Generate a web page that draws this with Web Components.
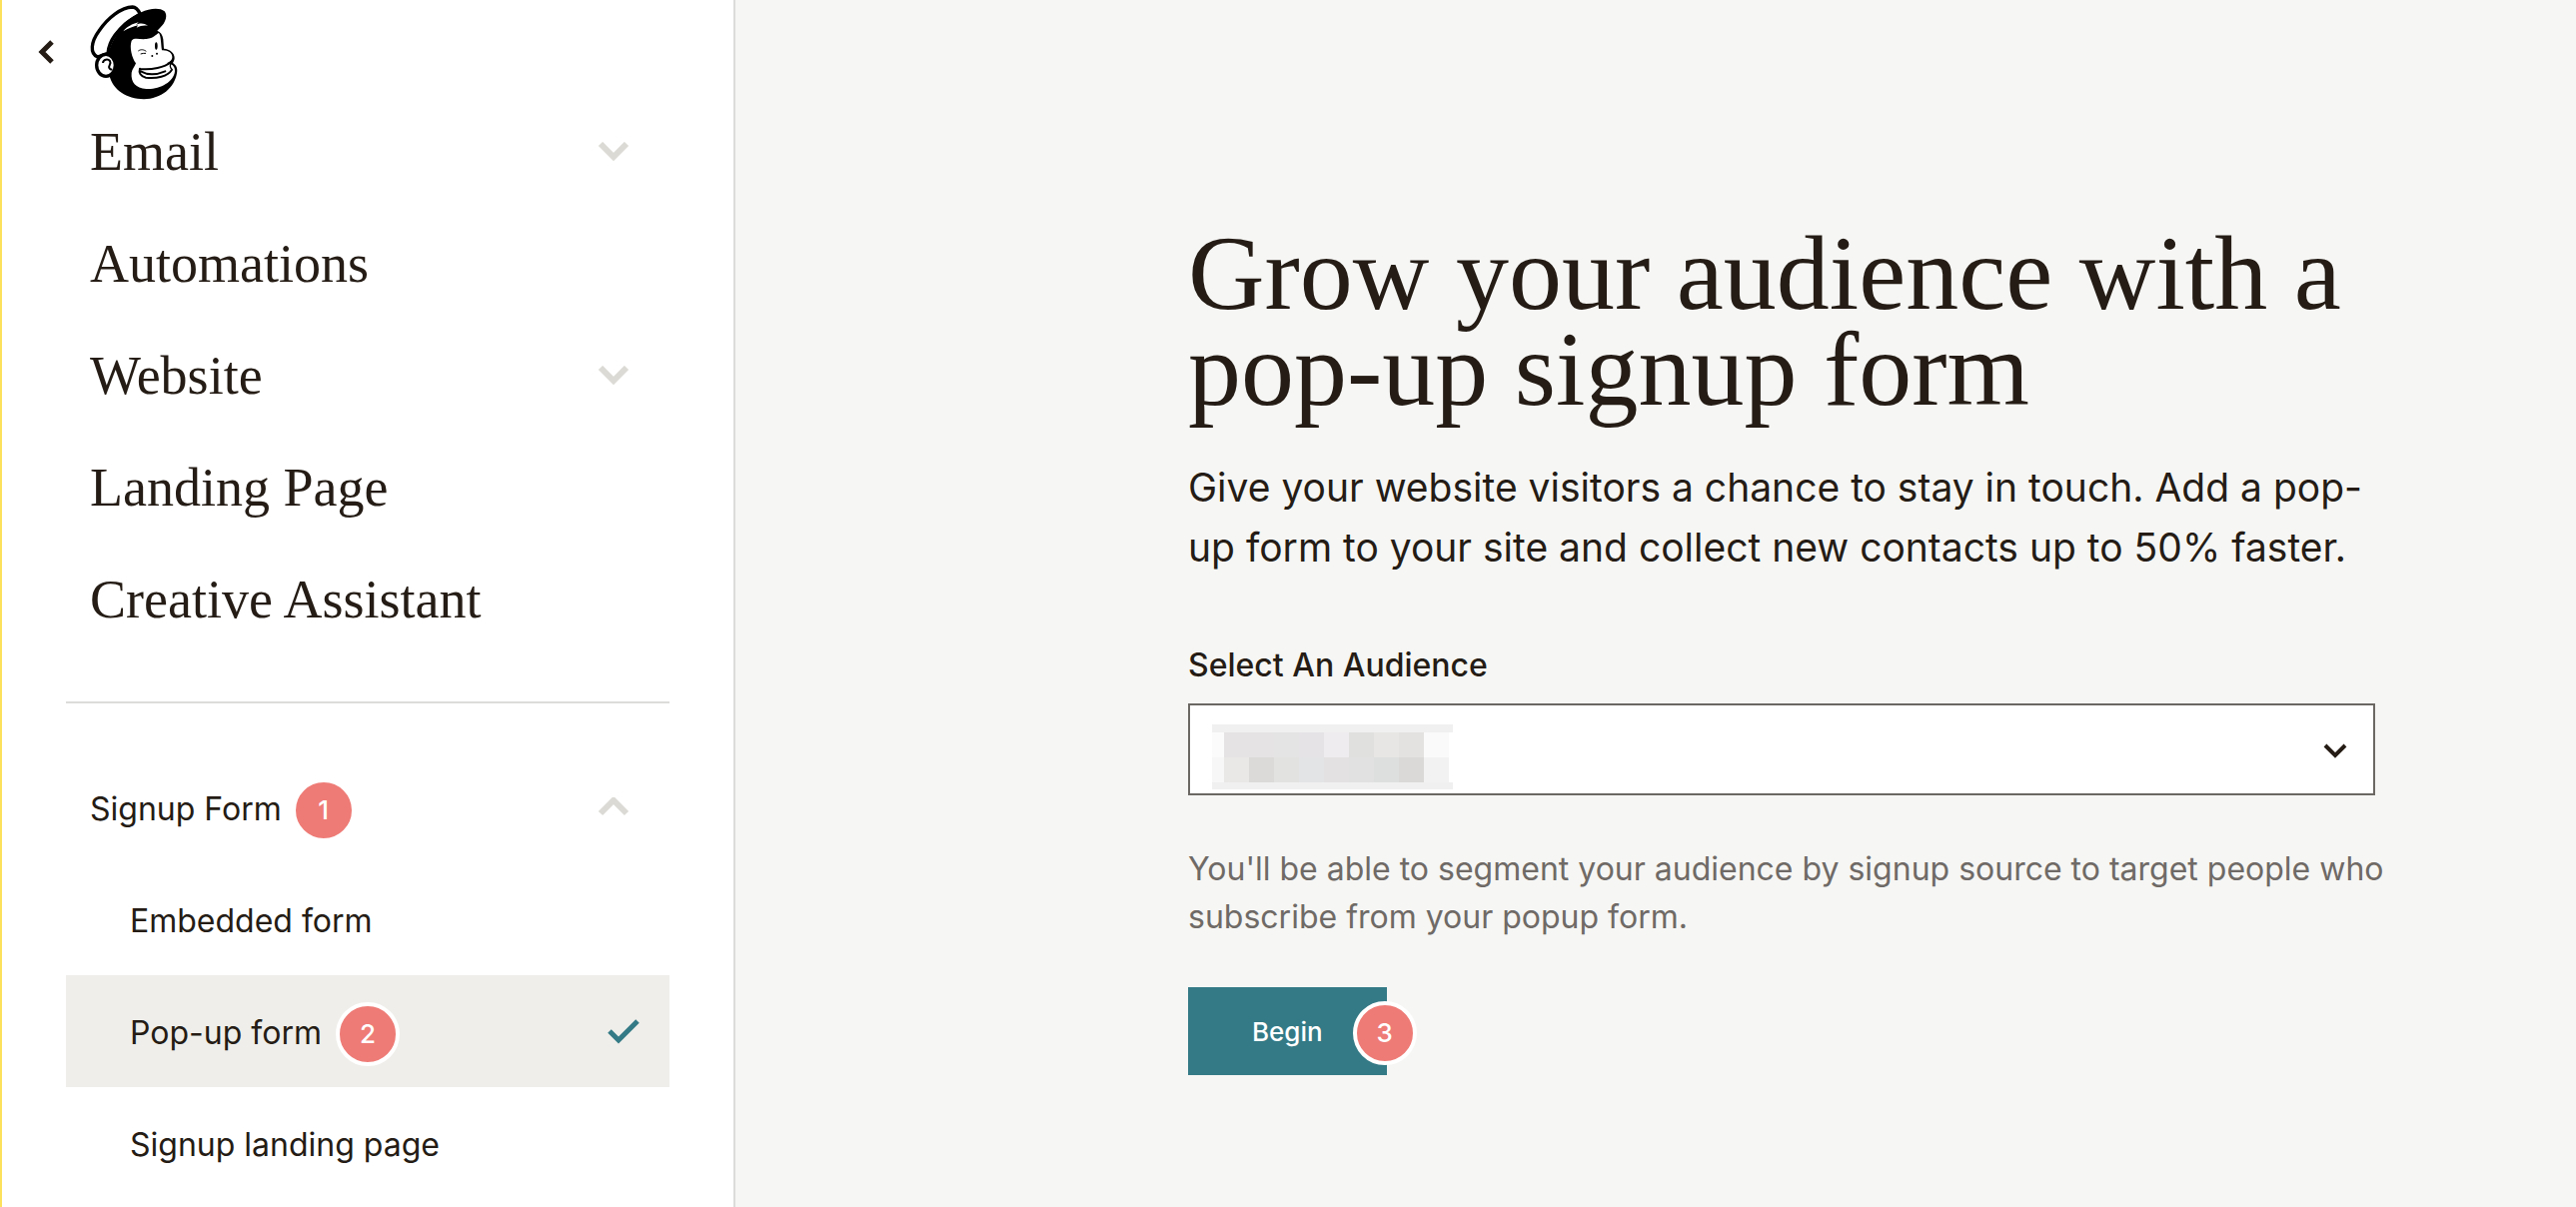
<!DOCTYPE html>
<html lang="en">
<head>
<meta charset="utf-8">
<title>Pop-up form</title>
<style>
  body {
    margin: 0;
    color: #241c15;
    background: #f6f6f4;
    font-family: Inter, "Liberation Sans", sans-serif;
    font-size: 32px;
    line-height: 48px;
  }
</style>
</head>
<body>

<app-shell>
  <side-nav slot="nav">
    <nav-item heading chevron="down">Email</nav-item>
    <nav-item heading>Automations</nav-item>
    <nav-item heading chevron="down">Website</nav-item>
    <nav-item heading>Landing Page</nav-item>
    <nav-item heading>Creative Assistant</nav-item>
    <nav-item slot="forms" chevron="up">Signup Form <step-badge slot="badge">1</step-badge></nav-item>
    <nav-item slot="forms" sub>Embedded form</nav-item>
    <nav-item slot="forms" sub current>Pop-up form <step-badge slot="badge">2</step-badge></nav-item>
    <nav-item slot="forms" sub>Signup landing page</nav-item>
  </side-nav>
  <popup-intro>
    <span slot="title">Grow your audience with a pop-up signup form</span>
    <span slot="text">Give your website visitors a chance to stay in touch. Add a pop-up form to your site and collect new contacts up to 50% faster.</span>
    <audience-select slot="field" label="Select An Audience"></audience-select>
    <span slot="help">You'll be able to segment your audience by signup source to target people who subscribe from your popup form.</span>
    <action-button slot="action">Begin <step-badge slot="badge">3</step-badge></action-button>
  </popup-intro>
</app-shell>

<script>
const shellStyle = `
<style>
  :host {
    display: grid;
    grid-template-columns: 736px minmax(0, 1fr);
    min-height: 100vh;
  }
</style>
`;

class AppShell extends HTMLElement {

    connectedCallback() {
        const shadow = this.attachShadow({ mode: 'open' });
        shadow.innerHTML = shellStyle + '<slot name="nav"></slot><slot></slot>';
    }

}

const badgeStyle = `
<style>
  :host {
    display: inline-flex;
    box-sizing: border-box;
    width: 64px;
    height: 64px;
    align-items: center;
    justify-content: center;
    border: 4px solid #fff;
    border-radius: 50%;
    background: #ee7b76;
    color: #fff;
    font-size: 26px;
    font-weight: 500;
  }
</style>
`;

class StepBadge extends HTMLElement {

    connectedCallback() {
        const shadow = this.attachShadow({ mode: 'open' });
        shadow.innerHTML = badgeStyle + '<slot></slot>';
    }

}

const logo = `
<svg width="96" height="104" viewBox="0 0 288 312" role="img" aria-label="Home">
  <path d="M66 168C74 132 84 112 104 92C124 64 152 48 166 37C190 25 222 22 236 34C246 46 240 68 222 84L214 92C224 96 230 104 232 118L234 146C252 148 266 158 266 174C266 180 263 185 261 189C272 196 276 206 273 220C266 264 226 297 174 298C122 297 82 272 70 226Z"/>
  <path d="M35 171C11 160 15 126 39 93C66 53 106 22 140 21C150 21 157 30 163 42C136 58 104 84 88 104C72 126 67 144 66 160Z" fill="#fff" stroke="#000" stroke-width="10" stroke-linejoin="round"/>
  <path d="M84 108C104 68 150 40 174 37C180 38 182 44 180 50C150 58 116 82 104 106Z"/>
  <ellipse cx="60" cy="196" rx="28" ry="33" fill="#fff" stroke="#000" stroke-width="10"/>
  <path d="M86 168C96 184 96 206 86 222" fill="none" stroke="#000" stroke-width="9"/>
  <path d="M51 189C52 178 66 176 72 183C78 192 66 197 70 204C73 209 76 208 78 210" fill="none" stroke="#000" stroke-width="6"/>
  <path d="M137 122C145 112 160 119 182 117C203 115 210 103 219 99C226 110 225 132 228 151C246 150 261 159 259 174C257 183 248 187 242 190C256 190 268 198 267 214C264 248 218 270 181 267C150 264 134 247 137 218C139 207 147 200 150 190C138 174 130 142 137 122Z" fill="#fff"/>
  <path d="M162 207C198 211 236 202 256 186M162 206C158 218 164 230 180 233C212 237 246 229 257 211M166 215C186 226 214 224 238 214" fill="none" stroke="#000" stroke-width="6" stroke-linecap="round"/>
  <path d="M256 190C251 196 252 204 260 210" fill="none" stroke="#000" stroke-width="4"/>
  <path d="M157 153C165 147 174 149 181 154M164 162C170 160 174 160 180 160" fill="none" stroke="#000" stroke-width="3"/>
  <ellipse cx="211" cy="138" rx="4" ry="11"/>
  <circle cx="199" cy="168" r="3"/>
  <circle cx="213" cy="161" r="3"/>
  <path d="M112 94C124 80 138 72 158 67L150 75C164 68 174 70 186 77C174 75 164 77 152 83L156 76C142 79 130 84 112 94Z" fill="#fff"/>
</svg>
`;

const navStyle = `
<style>
  :host {
    display: block;
    box-sizing: border-box;
    padding: 0 64px;
    border-left: 2px solid #fbe15c;
    border-right: 2px solid #dcdcda;
    background: #fff;
  }

  header {
    display: flex;
    height: 96px;
  }

  .back {
    width: 20px;
    margin-left: -30px;
    padding: 0;
    border: 0;
    background: none;
  }

  .back svg {
    display: block;
    margin-top: 8px;
  }

  .home {
    display: block;
    margin-left: 30px;
  }

  hr {
    height: 2px;
    margin: 46px 0 48px;
    border: 0;
    background: #dcdcda;
  }
</style>
`;

class SideNav extends HTMLElement {

    connectedCallback() {
        const shadow = this.attachShadow({ mode: 'open' });
        shadow.innerHTML = navStyle + `
            <header>
                <button class="back" type="button" aria-label="Back">
                    <svg width="20" height="24" viewBox="0 0 20 24" fill="none" stroke="#241c15" stroke-width="5"><path d="M16 2L6 12L16 22"/></svg>
                </button>
                <a class="home" href="#">${logo}</a>
            </header>
            <nav>
                <slot></slot>
                <hr>
                <slot name="forms"></slot>
            </nav>
        `;
    }

}

const itemStyle = `
<style>
  :host {
    display: block;
  }

  a {
    display: flex;
    height: 112px;
    align-items: center;
    padding: 0 40px 0 24px;
    color: inherit;
    text-decoration: none;
  }

  span {
    padding-top: 4px;
  }

  :host([heading]) a {
    font-family: "Liberation Serif", serif;
    font-size: 54px;
  }

  :host([heading]) span {
    padding-top: 0;
  }

  :host([sub]) a {
    padding-left: 64px;
  }

  :host([current]) a {
    padding-right: 28px;
    background: #efeeea;
  }

  /* the badge sits a little under the middle of the text */
  ::slotted(step-badge) {
    margin: 6px 0 0 10px;
  }

  :host([current]) ::slotted(step-badge) {
    margin-left: 14px;
  }

  svg {
    margin-left: auto;
  }
</style>
`;

const itemIcons = {
    down: '<svg width="32" height="20" viewBox="0 0 32 20" fill="none" stroke="#dbdad5" stroke-width="6"><path d="M3 2L16 15L29 2"/></svg>',
    up: '<svg width="32" height="20" viewBox="0 0 32 20" fill="none" stroke="#dbdad5" stroke-width="6"><path d="M3 16L16 3L29 16"/></svg>',
    check: '<svg width="36" height="28" viewBox="0 0 36 28" fill="none" stroke="#347a86" stroke-width="5"><path d="M4 14L13 23L32 4"/></svg>'
};

class NavItem extends HTMLElement {

    connectedCallback() {
        const shadow = this.attachShadow({ mode: 'open' });
        let icon = itemIcons[this.getAttribute('chevron')] || '';

        if(this.hasAttribute('current')){
            icon = itemIcons.check;
        }

        shadow.innerHTML = itemStyle + '<a href="#"><span><slot></slot></span><slot name="badge"></slot>' + icon + '</a>';

        if(this.hasAttribute('current')){
            shadow.querySelector('a').setAttribute('aria-current', 'page');
        }
    }

}

const introStyle = `
<style>
  :host {
    display: grid;
    grid-template-columns: minmax(0, 453fr) minmax(0, 1188px) minmax(0, 201fr);
    align-content: start;
    padding: 226px 0 64px;
  }

  main {
    grid-column: 2;
  }

  h1 {
    margin: 0 0 40px;
    font-family: "Liberation Serif", serif;
    font-size: 106px;
    font-weight: 400;
    line-height: 96px;
  }

  .text {
    margin: 0 0 64px;
    font-size: 39px;
    line-height: 60px;
  }

  .help {
    margin: 50px -16px 46px 0;
    color: #6f6a66;
  }
</style>
`;

class PopupIntro extends HTMLElement {

    connectedCallback() {
        const shadow = this.attachShadow({ mode: 'open' });
        shadow.innerHTML = introStyle + `
            <main>
                <h1><slot name="title"></slot></h1>
                <p class="text"><slot name="text"></slot></p>
                <slot name="field"></slot>
                <p class="help"><slot name="help"></slot></p>
                <slot name="action"></slot>
            </main>
        `;
    }

}

const selectStyle = `
<style>
  :host {
    display: block;
  }

  label {
    display: block;
    margin-bottom: 14px;
    font-weight: 500;
  }

  .box {
    position: relative;
  }

  select {
    display: block;
    width: 100%;
    height: 92px;
    padding: 0 64px 0 24px;
    border: 2px solid #6b6864;
    border-radius: 0;
    appearance: none;
    background: #fff;
    color: inherit;
    font: inherit;
  }

  svg {
    position: absolute;
    pointer-events: none;
  }

  .name {
    top: 21px;
    left: 24px;
  }

  .arrow {
    top: 40px;
    right: 28px;
  }
</style>
`;

// the audience name is hidden behind blocks: x, y, width, height, colour
const blocks = [
    [0, 0, 241, 8, '#f1f0f0'],
    [0, 8, 12, 25, '#fbfbfb'],
    [0, 33, 12, 25, '#f7f7f7'],
    [12, 8, 50, 25, '#e5e3e3'],
    [62, 8, 25, 25, '#e5e4e4'],
    [87, 8, 25, 25, '#e5e3e5'],
    [112, 8, 25, 25, '#eeecee'],
    [137, 8, 25, 25, '#e0e0de'],
    [162, 8, 25, 25, '#e7e6e5'],
    [187, 8, 25, 25, '#e3e2e0'],
    [212, 8, 25, 25, '#fafafa'],
    [12, 33, 25, 25, '#e9e8e7'],
    [37, 33, 25, 25, '#dbdad8'],
    [62, 33, 25, 25, '#e2e2e0'],
    [87, 33, 25, 25, '#e3e4e5'],
    [112, 33, 25, 25, '#e3e1e2'],
    [137, 33, 25, 25, '#e1e1e2'],
    [162, 33, 25, 25, '#dddede'],
    [187, 33, 25, 25, '#dbd9d8'],
    [212, 33, 25, 25, '#f2f2f2'],
    [0, 58, 241, 7, '#f1f0f0']
];

class AudienceSelect extends HTMLElement {

    connectedCallback() {
        const shadow = this.attachShadow({ mode: 'open' });
        let rects = '';
        for(const [x, y, w, h, fill] of blocks){
            rects += `<rect x="${x}" y="${y}" width="${w}" height="${h}" fill="${fill}"/>`;
        }
        shadow.innerHTML = selectStyle + `
            <label for="audience">${this.getAttribute('label')}</label>
            <div class="box">
                <select id="audience"><option value=""></option></select>
                <svg class="name" width="241" height="65" shape-rendering="crispEdges">${rects}</svg>
                <svg class="arrow" width="24" height="16" viewBox="0 0 24 16" fill="none" stroke="#241c15" stroke-width="4"><path d="M2 2L12 12L22 2"/></svg>
            </div>
        `;
    }

}

const buttonStyle = `
<style>
  :host {
    display: inline-block;
    position: relative;
  }

  button {
    display: block;
    height: 88px;
    padding: 2px 64px 0;
    border: 0;
    background: #347a86;
    color: #fff;
    font: inherit;
    font-size: 26px;
    font-weight: 500;
  }

  ::slotted(step-badge) {
    position: absolute;
    top: 14px;
    right: -30px;
  }
</style>
`;

class ActionButton extends HTMLElement {

    connectedCallback() {
        const shadow = this.attachShadow({ mode: 'open' });
        shadow.innerHTML = buttonStyle + '<button type="button"><slot></slot></button><slot name="badge"></slot>';
    }

}

customElements.define('app-shell', AppShell);
customElements.define('step-badge', StepBadge);
customElements.define('side-nav', SideNav);
customElements.define('nav-item', NavItem);
customElements.define('popup-intro', PopupIntro);
customElements.define('audience-select', AudienceSelect);
customElements.define('action-button', ActionButton);
</script>
</body>
</html>
